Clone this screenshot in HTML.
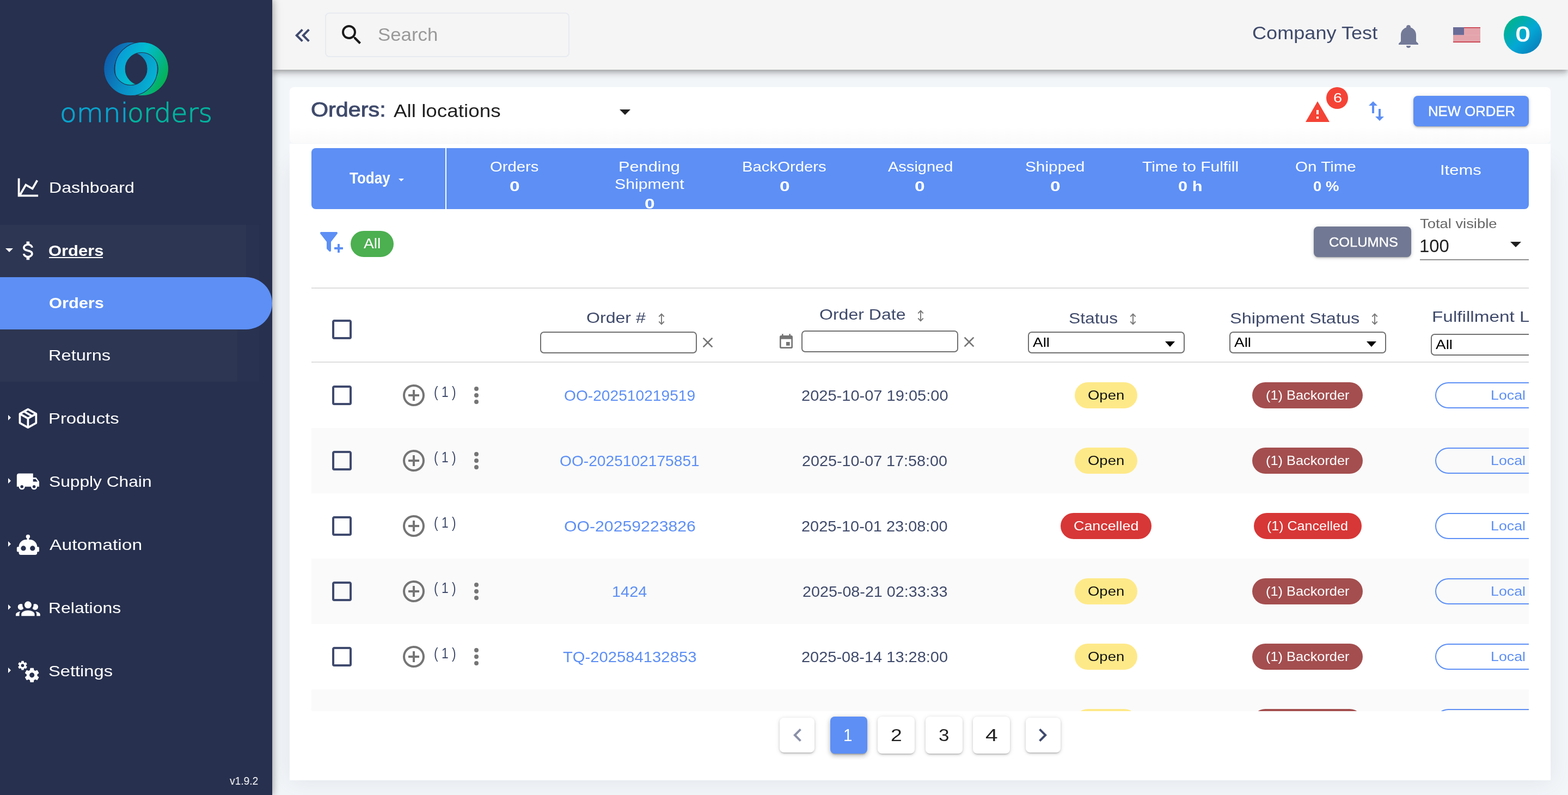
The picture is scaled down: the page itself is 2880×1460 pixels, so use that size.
<!DOCTYPE html>
<html lang="en"><head><meta charset="utf-8"><title>Orders</title>
<style>
*{box-sizing:border-box;margin:0;padding:0}
html,body{width:2880px;height:1460px;overflow:hidden;background:#f3f6f9}
body{font-family:"Liberation Sans",sans-serif;font-size:28px;position:relative}
div,span,svg,nav,header,main,aside,section,a,button,input,ul,li,h1,label,p,b,strong{position:absolute;display:block}
.t{white-space:nowrap;line-height:1;transform-origin:0 0;text-decoration:none;font-weight:400}
.i{overflow:visible}
button{border:0;background:none;font:inherit;color:inherit}
input{font:inherit;-webkit-appearance:none;appearance:none;outline:0}
a{color:inherit;text-decoration:none}
ul{list-style:none}
.field{border:2px solid #6f6f6f;border-radius:7px;background:#fff}
.chip{border-radius:24px}
.btn{border-radius:8px;box-shadow:0 3px 2px -2px rgba(0,0,0,.2),0 2px 4px rgba(0,0,0,.14),0 1px 8px rgba(0,0,0,.12)}
.pg{background:#fff;border-radius:8px;box-shadow:0 3px 2px -2px rgba(0,0,0,.2),0 2px 4px rgba(0,0,0,.14),0 1px 8px rgba(0,0,0,.12)}
.row-alt{background:#fafafa}
.rule{background:#dedede}
</style></head>
<body>
<div id="app" style="left:0;top:0;width:2880px;height:1460px;overflow:hidden;will-change:transform;">
<main class="content" style="left:0px;top:0px;width:2880px;height:1460px;">
<div class="card-shadow" style="left:532px;top:300px;width:2316px;height:1133px;box-shadow:0 2px 40px 2px rgba(60,80,100,.09);"></div>
<section class="card-head" style="left:532px;top:160px;width:2316px;height:103px;background:linear-gradient(#fff 70%,#fafafa);border-radius:8px;">
<h1 class="t" style="left:39.46px;top:24.02px;font-size:36.4px;color:#3f4a6b;transform:scaleX(1.1344);-webkit-text-stroke:.9px #3f4a6b;">Orders:</h1>
<span class="t" style="left:191.2px;top:28.03px;font-size:32.6px;color:#1f1f1f;transform:scaleX(1.1308);">All locations</span>
<svg class="i" viewBox="0 0 24 24" style="left:592.00px;top:20.50px;width:48.00px;height:48.00px;"><path fill="#1f1f1f" d="M7,10L12,15L17,10H7Z"/></svg>
<svg class="i" viewBox="0 0 24 24" style="left:1863.90px;top:22.20px;width:48.00px;height:48.00px;"><path fill="#f44336" d="M13,14H11V10H13M13,18H11V16H13M1,21H23L12,2L1,21Z"/></svg>
<span class="badge" style="left:1904px;top:0px;width:40px;height:40px;background:#f44336;border-radius:20px;">
<span class="t" style="left:12.54px;top:9.02px;font-size:23.5px;color:#fff;transform:scaleX(1.2346);">6</span>
</span>
<svg class="i" viewBox="0 0 24 24" style="left:1972.25px;top:20.25px;width:48.00px;height:48.00px;"><path fill="#5d8ff5" d="M9,3L5,7H8V14H10V7H13M16,17V10H14V17H11L15,21L19,17H16Z"/></svg>
<button class="btn" style="left:2064px;top:16px;width:212px;height:56px;background:#5d8ff5;">
<span class="t" style="left:26.99px;top:16.03px;font-size:25px;color:#fff;transform:scaleX(1.0296);-webkit-text-stroke:.4px #fff;">NEW ORDER</span>
</button>
</section>
<section class="card-body" style="left:532px;top:264px;width:2316px;height:1169px;background:#fff;">
<div class="stats" style="left:40px;top:8px;width:2236px;height:112px;background:#5d8ff5;border-radius:8px;overflow:hidden;">
<button class="period" style="left:0px;top:0px;width:246px;height:112px;">
<span class="t" style="left:70.2px;top:41.02px;font-size:28.9px;color:#fff;transform:scaleX(0.8996);font-weight:700;">Today</span>
<div class="caret" style="left:159.7px;top:55.8px;width:10px;height:5.5px;width:0;height:0;border-left:5px solid transparent;border-right:5px solid transparent;border-top:5.5px solid #fff;"></div>
</button>
<div class="sep" style="left:246px;top:0px;width:2px;height:112px;background:#fff;"></div>
<div class="stat" style="left:248.5px;top:0px;width:248.25px;height:112px;">
<span class="t" style="left:79.38px;top:21.03px;font-size:26.5px;color:#fff;transform:scaleX(1.1024);">Orders</span>
<b class="t" style="left:115.08px;top:58.03px;font-size:25.2px;color:#fff;transform:scaleX(1.3313);font-weight:700;">0</b>
</div>
<div class="stat" style="left:496.75px;top:0px;width:248.25px;height:112px;">
<span class="t" style="left:67.47px;top:21.03px;font-size:26.5px;color:#fff;transform:scaleX(1.1607);">Pending</span>
<span class="t" style="left:59.93px;top:53.03px;font-size:26.5px;color:#fff;transform:scaleX(1.1397);">Shipment</span>
<b class="t" style="left:115.28px;top:90.03px;font-size:25.2px;color:#fff;transform:scaleX(1.3313);font-weight:700;">0</b>
</div>
<div class="stat" style="left:745px;top:0px;width:248.25px;height:112px;">
<span class="t" style="left:46.21px;top:21.03px;font-size:26.5px;color:#fff;transform:scaleX(1.1058);">BackOrders</span>
<b class="t" style="left:115.08px;top:58.03px;font-size:25.2px;color:#fff;transform:scaleX(1.3313);font-weight:700;">0</b>
</div>
<div class="stat" style="left:993.25px;top:0px;width:248.25px;height:112px;">
<span class="t" style="left:65.38px;top:21.03px;font-size:26.5px;color:#fff;transform:scaleX(1.0951);">Assigned</span>
<b class="t" style="left:115.08px;top:58.03px;font-size:25.2px;color:#fff;transform:scaleX(1.3313);font-weight:700;">0</b>
</div>
<div class="stat" style="left:1241.5px;top:0px;width:248.25px;height:112px;">
<span class="t" style="left:69.94px;top:21.03px;font-size:26.5px;color:#fff;transform:scaleX(1.1244);">Shipped</span>
<b class="t" style="left:115.08px;top:58.03px;font-size:25.2px;color:#fff;transform:scaleX(1.3313);font-weight:700;">0</b>
</div>
<div class="stat" style="left:1489.75px;top:0px;width:248.25px;height:112px;">
<span class="t" style="left:36.43px;top:21.03px;font-size:26.5px;color:#fff;transform:scaleX(1.1314);">Time to Fulfill</span>
<b class="t" style="left:102.29px;top:58.03px;font-size:25.2px;color:#fff;transform:scaleX(1.2208);font-weight:700;">0 h</b>
</div>
<div class="stat" style="left:1738px;top:0px;width:248.25px;height:112px;">
<span class="t" style="left:69.49px;top:21.03px;font-size:26.5px;color:#fff;transform:scaleX(1.1165);">On Time</span>
<b class="t" style="left:101.76px;top:58.03px;font-size:25.2px;color:#fff;transform:scaleX(1.0939);font-weight:700;">0 %</b>
</div>
<div class="stat" style="left:1986.25px;top:0px;width:248.25px;height:112px;">
<span class="t" style="left:87.21px;top:27.03px;font-size:26.5px;color:#fff;transform:scaleX(1.1674);">Items</span>
</div>
</div>
<svg class="i" viewBox="0 0 24 24" style="left:52.00px;top:156.25px;width:48.00px;height:48.00px;"><path fill="#5d8ff5" d="M12,12V19.88C12.04,20.18 11.94,20.5 11.71,20.71C11.32,21.1 10.69,21.1 10.3,20.71L8.29,18.7C8.06,18.47 7.96,18.16 8,17.87V12H7.97L2.21,4.62C1.87,4.19 1.95,3.56 2.38,3.22C2.57,3.08 2.78,3 3,3H17C17.22,3 17.43,3.08 17.62,3.22C18.05,3.56 18.13,4.19 17.79,4.62L12.03,12H12M15,17H18V14H20V17H23V19H20V22H18V19H15V17Z"/></svg>
<span class="chip" style="left:112.25px;top:160px;width:78.75px;height:48px;background:#4caf50;">
<span class="t" style="left:23.75px;top:10.03px;font-size:26px;color:#fff;transform:scaleX(1.0853);">All</span>
</span>
<button class="btn" style="left:1881px;top:152px;width:179px;height:56px;background:#717893;">
<span class="t" style="left:27.51px;top:17.03px;font-size:24.2px;color:#fff;transform:scaleX(1.0491);-webkit-text-stroke:.4px #fff;">COLUMNS</span>
</button>
<div class="select-visible" style="left:2076px;top:132px;width:200px;height:82px;">
<label class="t" style="left:0.07px;top:3.02px;font-size:24.4px;color:#666;transform:scaleX(1.1222);">Total visible</label>
<span class="t" style="left:-1.06px;top:40.03px;font-size:32.6px;color:#1f1f1f;transform:scaleX(1.0089);">100</span>
<svg class="i" viewBox="0 0 24 24" style="left:152.00px;top:27.75px;width:48.00px;height:48.00px;"><path fill="#1f1f1f" d="M7,10L12,15L17,10H7Z"/></svg>
<div class="underline" style="left:0px;top:80px;width:200px;height:2px;background:#8e8e8e;"></div>
</div>
<div class="rule" style="left:40px;top:264px;width:2236px;height:2px;"></div>
<div class="table" style="left:40px;top:266px;width:2236px;height:776px;overflow:hidden;">
<div class="thead" style="left:0px;top:0px;width:2236px;height:134px;">
<svg class="i" viewBox="0 0 24 24" style="left:32.00px;top:51.00px;width:48.00px;height:48.00px;"><path fill="#3f4a6e" d="M19,3H5C3.89,3 3,3.89 3,5V19A2,2 0 0,0 5,21H19A2,2 0 0,0 21,19V5C21,3.89 20.1,3 19,3M19,5V19H5V5H19Z"/></svg>
<span class="t" style="left:505.25px;top:40.03px;font-size:27.4px;color:#3f4a6b;transform:scaleX(1.1713);">Order #</span>
<svg class="i sort" viewBox="0 0 12 22" style="left:636.7px;top:45.3px;width:12px;height:22px"><path fill="none" stroke="#787878" stroke-width="1.9" d="M6 1.6V20.4M1.3 6.5L6 1.6L10.7 6.5M1.3 15.5L6 20.4L10.7 15.5"/></svg>
<input class="field" type="text" aria-label="Order #" style="left:420px;top:79px;width:288px;height:40px;">
<svg class="i" viewBox="0 0 24 24" style="left:712.10px;top:83.10px;width:32.00px;height:32.00px;"><path fill="#757575" d="M19,6.41L17.59,5L12,10.59L6.41,5L5,6.41L10.59,12L5,17.59L6.41,19L12,13.41L17.59,19L19,17.59L13.41,12L19,6.41Z"/></svg>
<span class="t" style="left:932.75px;top:34.03px;font-size:27.4px;color:#3f4a6b;transform:scaleX(1.1699);">Order Date</span>
<svg class="i sort" viewBox="0 0 12 22" style="left:1113.2px;top:39.4px;width:12px;height:22px"><path fill="none" stroke="#787878" stroke-width="1.9" d="M6 1.6V20.4M1.3 6.5L6 1.6L10.7 6.5M1.3 15.5L6 20.4L10.7 15.5"/></svg>
<svg class="i" viewBox="0 0 24 24" style="left:856.10px;top:82.00px;width:32.00px;height:32.00px;"><path fill="#757575" d="M19,19H5V8H19M16,1V3H8V1H6V3H5C3.89,3 3,3.89 3,5V19A2,2 0 0,0 5,21H19A2,2 0 0,0 21,19V5C21,3.89 20.1,3 19,3H18V1M17,12H12V17H17V12Z"/></svg>
<input class="field" type="text" aria-label="Order Date" style="left:900px;top:77px;width:288px;height:40px;">
<svg class="i" viewBox="0 0 24 24" style="left:1192.00px;top:82.40px;width:32.00px;height:32.00px;"><path fill="#757575" d="M19,6.41L17.59,5L12,10.59L6.41,5L5,6.41L10.59,12L5,17.59L6.41,19L12,13.41L17.59,19L19,17.59L13.41,12L19,6.41Z"/></svg>
<span class="t" style="left:1391.01px;top:41.03px;font-size:27.4px;color:#3f4a6b;transform:scaleX(1.1617);">Status</span>
<svg class="i sort" viewBox="0 0 12 22" style="left:1503.2px;top:45.3px;width:12px;height:22px"><path fill="none" stroke="#787878" stroke-width="1.9" d="M6 1.6V20.4M1.3 6.5L6 1.6L10.7 6.5M1.3 15.5L6 20.4L10.7 15.5"/></svg>
<div class="field sel" style="left:1316px;top:79px;width:288px;height:40px;"></div><span class="t" style="left:1325.2px;top:87.03px;font-size:24.5px;color:#000;transform:scaleX(1.1401);">All</span><div class="caret" style="left:1568.4px;top:96.5px;width:19.5px;height:10.2px;width:0;height:0;border-left:9.75px solid transparent;border-right:9.75px solid transparent;border-top:10.2px solid #000;"></div>
<span class="t" style="left:1686.74px;top:41.03px;font-size:27.4px;color:#3f4a6b;transform:scaleX(1.1852);">Shipment Status</span>
<svg class="i sort" viewBox="0 0 12 22" style="left:1946.8px;top:45px;width:12px;height:22px"><path fill="none" stroke="#787878" stroke-width="1.9" d="M6 1.6V20.4M1.3 6.5L6 1.6L10.7 6.5M1.3 15.5L6 20.4L10.7 15.5"/></svg>
<div class="field sel" style="left:1686px;top:79px;width:288px;height:40px;"></div><span class="t" style="left:1695.2px;top:87.03px;font-size:24.5px;color:#000;transform:scaleX(1.1401);">All</span><div class="caret" style="left:1938.4px;top:96.5px;width:19.5px;height:10.2px;width:0;height:0;border-left:9.75px solid transparent;border-right:9.75px solid transparent;border-top:10.2px solid #000;"></div>
<span class="t" style="left:2057.8px;top:38.03px;font-size:27.4px;color:#3f4a6b;transform:scaleX(1.2162);">Fulfillment Location</span>
<div class="field sel" style="left:2056px;top:83px;width:288px;height:40px;"></div><span class="t" style="left:2065.2px;top:91.03px;font-size:24.5px;color:#000;transform:scaleX(1.1401);">All</span><div class="caret" style="left:2308.4px;top:100.5px;width:19.5px;height:10.2px;width:0;height:0;border-left:9.75px solid transparent;border-right:9.75px solid transparent;border-top:10.2px solid #000;"></div>
</div>
<div class="rule" style="left:0px;top:134px;width:2236px;height:2px;"></div>
<div class="row" style="left:0px;top:136px;width:2236px;height:120px;">
<svg class="i" viewBox="0 0 24 24" style="left:32.00px;top:36.00px;width:48.00px;height:48.00px;"><path fill="#3f4a6e" d="M19,3H5C3.89,3 3,3.89 3,5V19A2,2 0 0,0 5,21H19A2,2 0 0,0 21,19V5C21,3.89 20.1,3 19,3M19,5V19H5V5H19Z"/></svg>
<svg class="i" viewBox="0 0 24 24" style="left:164.10px;top:35.90px;width:48.00px;height:48.00px;"><path fill="#757575" d="M12,20C7.59,20 4,16.41 4,12C4,7.59 7.59,4 12,4C16.41,4 20,7.59 20,12C20,16.41 16.41,20 12,20M12,2A10,10 0 0,0 2,12A10,10 0 0,0 12,22A10,10 0 0,0 22,12A10,10 0 0,0 12,2M13,7H11V11H7V13H11V17H13V13H17V11H13V7Z"/></svg>
<span class="t" style="left:225.18px;top:41.04px;font-size:27px;color:#3f4a6b;transform:scaleX(0.8437);">( 1 )</span>
<svg class="i" viewBox="0 0 24 24" style="left:279.25px;top:36.00px;width:48.00px;height:48.00px;"><path fill="#757575" d="M12,16A2,2 0 0,1 14,18A2,2 0 0,1 12,20A2,2 0 0,1 10,18A2,2 0 0,1 12,16M12,10A2,2 0 0,1 14,12A2,2 0 0,1 12,14A2,2 0 0,1 10,12A2,2 0 0,1 12,10M12,4A2,2 0 0,1 14,6A2,2 0 0,1 12,8A2,2 0 0,1 10,6A2,2 0 0,1 12,4Z"/></svg>
<a class="t" style="left:464px;top:46.04px;font-size:28.5px;color:#5d8ff5;transform:scaleX(0.9884);">OO-202510219519</a>
<span class="t" style="left:899.89px;top:46.04px;font-size:28.5px;color:#3f4a6b;transform:scaleX(1.0187);">2025-10-07 19:05:00</span>
<span class="chip" style="left:1402px;top:36px;width:115px;height:48px;background:#fee989;">
<span class="t" style="left:24.01px;top:12.03px;font-size:24.1px;color:#111;transform:scaleX(1.1404);">Open</span>
</span>
<span class="chip" style="left:1728px;top:36px;width:203px;height:48px;background:#a44e4f;">
<span class="t" style="left:24.61px;top:12.03px;font-size:24.1px;color:#fff;transform:scaleX(1.0515);">(1) Backorder</span>
</span>
<span class="chip" style="left:2064px;top:36px;width:267px;height:48px;box-shadow:inset 0 0 0 2px #5d8ff5;">
<span class="t" style="left:101.71px;top:12.03px;font-size:24.1px;color:#5d8ff5;transform:scaleX(1.1119);">Local</span>
</span>
</div>
<div class="row row-alt" style="left:0px;top:256px;width:2236px;height:120px;">
<svg class="i" viewBox="0 0 24 24" style="left:32.00px;top:36.00px;width:48.00px;height:48.00px;"><path fill="#3f4a6e" d="M19,3H5C3.89,3 3,3.89 3,5V19A2,2 0 0,0 5,21H19A2,2 0 0,0 21,19V5C21,3.89 20.1,3 19,3M19,5V19H5V5H19Z"/></svg>
<svg class="i" viewBox="0 0 24 24" style="left:164.10px;top:35.90px;width:48.00px;height:48.00px;"><path fill="#757575" d="M12,20C7.59,20 4,16.41 4,12C4,7.59 7.59,4 12,4C16.41,4 20,7.59 20,12C20,16.41 16.41,20 12,20M12,2A10,10 0 0,0 2,12A10,10 0 0,0 12,22A10,10 0 0,0 22,12A10,10 0 0,0 12,2M13,7H11V11H7V13H11V17H13V13H17V11H13V7Z"/></svg>
<span class="t" style="left:225.18px;top:41.04px;font-size:27px;color:#3f4a6b;transform:scaleX(0.8437);">( 1 )</span>
<svg class="i" viewBox="0 0 24 24" style="left:279.25px;top:36.00px;width:48.00px;height:48.00px;"><path fill="#757575" d="M12,16A2,2 0 0,1 14,18A2,2 0 0,1 12,20A2,2 0 0,1 10,18A2,2 0 0,1 12,16M12,10A2,2 0 0,1 14,12A2,2 0 0,1 12,14A2,2 0 0,1 10,12A2,2 0 0,1 12,10M12,4A2,2 0 0,1 14,6A2,2 0 0,1 12,8A2,2 0 0,1 10,6A2,2 0 0,1 12,4Z"/></svg>
<a class="t" style="left:456.26px;top:46.04px;font-size:28.5px;color:#5d8ff5;transform:scaleX(0.9878);">OO-2025102175851</a>
<span class="t" style="left:901.15px;top:46.04px;font-size:28.5px;color:#3f4a6b;transform:scaleX(1.0092);">2025-10-07 17:58:00</span>
<span class="chip" style="left:1402px;top:36px;width:115px;height:48px;background:#fee989;">
<span class="t" style="left:24.01px;top:12.03px;font-size:24.1px;color:#111;transform:scaleX(1.1404);">Open</span>
</span>
<span class="chip" style="left:1728px;top:36px;width:203px;height:48px;background:#a44e4f;">
<span class="t" style="left:24.61px;top:12.03px;font-size:24.1px;color:#fff;transform:scaleX(1.0515);">(1) Backorder</span>
</span>
<span class="chip" style="left:2064px;top:36px;width:267px;height:48px;box-shadow:inset 0 0 0 2px #5d8ff5;">
<span class="t" style="left:101.71px;top:12.03px;font-size:24.1px;color:#5d8ff5;transform:scaleX(1.1119);">Local</span>
</span>
</div>
<div class="row" style="left:0px;top:376px;width:2236px;height:120px;">
<svg class="i" viewBox="0 0 24 24" style="left:32.00px;top:36.00px;width:48.00px;height:48.00px;"><path fill="#3f4a6e" d="M19,3H5C3.89,3 3,3.89 3,5V19A2,2 0 0,0 5,21H19A2,2 0 0,0 21,19V5C21,3.89 20.1,3 19,3M19,5V19H5V5H19Z"/></svg>
<svg class="i" viewBox="0 0 24 24" style="left:164.10px;top:35.90px;width:48.00px;height:48.00px;"><path fill="#757575" d="M12,20C7.59,20 4,16.41 4,12C4,7.59 7.59,4 12,4C16.41,4 20,7.59 20,12C20,16.41 16.41,20 12,20M12,2A10,10 0 0,0 2,12A10,10 0 0,0 12,22A10,10 0 0,0 22,12A10,10 0 0,0 12,2M13,7H11V11H7V13H11V17H13V13H17V11H13V7Z"/></svg>
<span class="t" style="left:225.18px;top:41.04px;font-size:27px;color:#3f4a6b;transform:scaleX(0.8437);">( 1 )</span>
<a class="t" style="left:463.66px;top:46.04px;font-size:28.5px;color:#5d8ff5;transform:scaleX(1.0601);">OO-20259223826</a>
<span class="t" style="left:900.39px;top:46.04px;font-size:28.5px;color:#3f4a6b;transform:scaleX(1.0149);">2025-10-01 23:08:00</span>
<span class="chip" style="left:1376px;top:36px;width:167px;height:48px;background:#d73737;">
<span class="t" style="left:24.04px;top:12.03px;font-size:24.1px;color:#fff;transform:scaleX(1.1137);">Cancelled</span>
</span>
<span class="chip" style="left:1731px;top:36px;width:198px;height:48px;background:#d73737;">
<span class="t" style="left:24.23px;top:12.03px;font-size:24.1px;color:#fff;transform:scaleX(1.0387);">(1) Cancelled</span>
</span>
<span class="chip" style="left:2064px;top:36px;width:267px;height:48px;box-shadow:inset 0 0 0 2px #5d8ff5;">
<span class="t" style="left:101.71px;top:12.03px;font-size:24.1px;color:#5d8ff5;transform:scaleX(1.1119);">Local</span>
</span>
</div>
<div class="row row-alt" style="left:0px;top:496px;width:2236px;height:120px;">
<svg class="i" viewBox="0 0 24 24" style="left:32.00px;top:36.00px;width:48.00px;height:48.00px;"><path fill="#3f4a6e" d="M19,3H5C3.89,3 3,3.89 3,5V19A2,2 0 0,0 5,21H19A2,2 0 0,0 21,19V5C21,3.89 20.1,3 19,3M19,5V19H5V5H19Z"/></svg>
<svg class="i" viewBox="0 0 24 24" style="left:164.10px;top:35.90px;width:48.00px;height:48.00px;"><path fill="#757575" d="M12,20C7.59,20 4,16.41 4,12C4,7.59 7.59,4 12,4C16.41,4 20,7.59 20,12C20,16.41 16.41,20 12,20M12,2A10,10 0 0,0 2,12A10,10 0 0,0 12,22A10,10 0 0,0 22,12A10,10 0 0,0 12,2M13,7H11V11H7V13H11V17H13V13H17V11H13V7Z"/></svg>
<span class="t" style="left:225.18px;top:41.04px;font-size:27px;color:#3f4a6b;transform:scaleX(0.8437);">( 1 )</span>
<svg class="i" viewBox="0 0 24 24" style="left:279.25px;top:36.00px;width:48.00px;height:48.00px;"><path fill="#757575" d="M12,16A2,2 0 0,1 14,18A2,2 0 0,1 12,20A2,2 0 0,1 10,18A2,2 0 0,1 12,16M12,10A2,2 0 0,1 14,12A2,2 0 0,1 12,14A2,2 0 0,1 10,12A2,2 0 0,1 12,10M12,4A2,2 0 0,1 14,6A2,2 0 0,1 12,8A2,2 0 0,1 10,6A2,2 0 0,1 12,4Z"/></svg>
<a class="t" style="left:552.02px;top:46.04px;font-size:28.5px;color:#5d8ff5;transform:scaleX(1.0138);">1424</a>
<span class="t" style="left:901.65px;top:46.04px;font-size:28.5px;color:#3f4a6b;transform:scaleX(1.0071);">2025-08-21 02:33:33</span>
<span class="chip" style="left:1402px;top:36px;width:115px;height:48px;background:#fee989;">
<span class="t" style="left:24.01px;top:12.03px;font-size:24.1px;color:#111;transform:scaleX(1.1404);">Open</span>
</span>
<span class="chip" style="left:1728px;top:36px;width:203px;height:48px;background:#a44e4f;">
<span class="t" style="left:24.61px;top:12.03px;font-size:24.1px;color:#fff;transform:scaleX(1.0515);">(1) Backorder</span>
</span>
<span class="chip" style="left:2064px;top:36px;width:267px;height:48px;box-shadow:inset 0 0 0 2px #5d8ff5;">
<span class="t" style="left:101.71px;top:12.03px;font-size:24.1px;color:#5d8ff5;transform:scaleX(1.1119);">Local</span>
</span>
</div>
<div class="row" style="left:0px;top:616px;width:2236px;height:120px;">
<svg class="i" viewBox="0 0 24 24" style="left:32.00px;top:36.00px;width:48.00px;height:48.00px;"><path fill="#3f4a6e" d="M19,3H5C3.89,3 3,3.89 3,5V19A2,2 0 0,0 5,21H19A2,2 0 0,0 21,19V5C21,3.89 20.1,3 19,3M19,5V19H5V5H19Z"/></svg>
<svg class="i" viewBox="0 0 24 24" style="left:164.10px;top:35.90px;width:48.00px;height:48.00px;"><path fill="#757575" d="M12,20C7.59,20 4,16.41 4,12C4,7.59 7.59,4 12,4C16.41,4 20,7.59 20,12C20,16.41 16.41,20 12,20M12,2A10,10 0 0,0 2,12A10,10 0 0,0 12,22A10,10 0 0,0 22,12A10,10 0 0,0 12,2M13,7H11V11H7V13H11V17H13V13H17V11H13V7Z"/></svg>
<span class="t" style="left:225.18px;top:41.04px;font-size:27px;color:#3f4a6b;transform:scaleX(0.8437);">( 1 )</span>
<svg class="i" viewBox="0 0 24 24" style="left:279.25px;top:36.00px;width:48.00px;height:48.00px;"><path fill="#757575" d="M12,16A2,2 0 0,1 14,18A2,2 0 0,1 12,20A2,2 0 0,1 10,18A2,2 0 0,1 12,16M12,10A2,2 0 0,1 14,12A2,2 0 0,1 12,14A2,2 0 0,1 10,12A2,2 0 0,1 12,10M12,4A2,2 0 0,1 14,6A2,2 0 0,1 12,8A2,2 0 0,1 10,6A2,2 0 0,1 12,4Z"/></svg>
<a class="t" style="left:462.37px;top:46.04px;font-size:28.5px;color:#5d8ff5;transform:scaleX(1.0256);">TQ-202584132853</a>
<span class="t" style="left:900.14px;top:46.04px;font-size:28.5px;color:#3f4a6b;transform:scaleX(1.0168);">2025-08-14 13:28:00</span>
<span class="chip" style="left:1402px;top:36px;width:115px;height:48px;background:#fee989;">
<span class="t" style="left:24.01px;top:12.03px;font-size:24.1px;color:#111;transform:scaleX(1.1404);">Open</span>
</span>
<span class="chip" style="left:1728px;top:36px;width:203px;height:48px;background:#a44e4f;">
<span class="t" style="left:24.61px;top:12.03px;font-size:24.1px;color:#fff;transform:scaleX(1.0515);">(1) Backorder</span>
</span>
<span class="chip" style="left:2064px;top:36px;width:267px;height:48px;box-shadow:inset 0 0 0 2px #5d8ff5;">
<span class="t" style="left:101.71px;top:12.03px;font-size:24.1px;color:#5d8ff5;transform:scaleX(1.1119);">Local</span>
</span>
</div>
<div class="row row-alt" style="left:0px;top:736px;width:2236px;height:120px;">
<svg class="i" viewBox="0 0 24 24" style="left:32.00px;top:36.00px;width:48.00px;height:48.00px;"><path fill="#3f4a6e" d="M19,3H5C3.89,3 3,3.89 3,5V19A2,2 0 0,0 5,21H19A2,2 0 0,0 21,19V5C21,3.89 20.1,3 19,3M19,5V19H5V5H19Z"/></svg>
<svg class="i" viewBox="0 0 24 24" style="left:164.10px;top:35.90px;width:48.00px;height:48.00px;"><path fill="#757575" d="M12,20C7.59,20 4,16.41 4,12C4,7.59 7.59,4 12,4C16.41,4 20,7.59 20,12C20,16.41 16.41,20 12,20M12,2A10,10 0 0,0 2,12A10,10 0 0,0 12,22A10,10 0 0,0 22,12A10,10 0 0,0 12,2M13,7H11V11H7V13H11V17H13V13H17V11H13V7Z"/></svg>
<span class="t" style="left:225.18px;top:41.04px;font-size:27px;color:#3f4a6b;transform:scaleX(0.8437);">( 1 )</span>
<svg class="i" viewBox="0 0 24 24" style="left:279.25px;top:36.00px;width:48.00px;height:48.00px;"><path fill="#757575" d="M12,16A2,2 0 0,1 14,18A2,2 0 0,1 12,20A2,2 0 0,1 10,18A2,2 0 0,1 12,16M12,10A2,2 0 0,1 14,12A2,2 0 0,1 12,14A2,2 0 0,1 10,12A2,2 0 0,1 12,10M12,4A2,2 0 0,1 14,6A2,2 0 0,1 12,8A2,2 0 0,1 10,6A2,2 0 0,1 12,4Z"/></svg>
<span class="chip" style="left:1402px;top:36px;width:115px;height:48px;background:#fee989;">
<span class="t" style="left:24.01px;top:12.03px;font-size:24.1px;color:#111;transform:scaleX(1.1404);">Open</span>
</span>
<span class="chip" style="left:1728px;top:36px;width:203px;height:48px;background:#a44e4f;">
<span class="t" style="left:24.61px;top:12.03px;font-size:24.1px;color:#fff;transform:scaleX(1.0515);">(1) Backorder</span>
</span>
<span class="chip" style="left:2064px;top:36px;width:267px;height:48px;box-shadow:inset 0 0 0 2px #5d8ff5;">
<span class="t" style="left:101.71px;top:12.03px;font-size:24.1px;color:#5d8ff5;transform:scaleX(1.1119);">Local</span>
</span>
</div>
</div>
<nav class="pagination" style="left:868px;top:1042px;width:580px;height:94px;">
<button class="pg" style="left:32px;top:12px;width:64px;height:64px;">
<svg class="i" viewBox="0 0 24 24" style="left:8.60px;top:8.00px;width:48.00px;height:48.00px;"><path fill="#8b90a8" d="M15.41,16.58L10.83,12L15.41,7.41L14,6L8,12L14,18L15.41,16.58Z"/></svg>
</button>
<button class="pg-active" style="left:125px;top:10px;width:68px;height:68px;background:#5d8ff5;border-radius:8px;box-shadow:0 3px 3px -2px rgba(0,0,0,.3),0 4px 8px rgba(0,0,0,.2),0 1px 12px rgba(0,0,0,.12);">
<span class="t" style="left:24.31px;top:19.03px;font-size:31.2px;color:#fff;transform:scaleX(0.95);">1</span>
</button>
<button class="pg" style="left:212.3px;top:10px;width:68px;height:68px;">
<span class="t" style="left:23.7px;top:19.03px;font-size:31.2px;color:#1f1f1f;transform:scaleX(1.1966);">2</span>
</button>
<button class="pg" style="left:299.6px;top:10px;width:68px;height:68px;">
<span class="t" style="left:24.6px;top:19.03px;font-size:31.2px;color:#1f1f1f;transform:scaleX(1.1249);">3</span>
</button>
<button class="pg" style="left:387px;top:10px;width:68px;height:68px;">
<span class="t" style="left:23.06px;top:19.03px;font-size:31.2px;color:#1f1f1f;transform:scaleX(1.3054);">4</span>
</button>
<button class="pg" style="left:484px;top:12px;width:64px;height:64px;">
<svg class="i" viewBox="0 0 24 24" style="left:7.40px;top:8.00px;width:48.00px;height:48.00px;"><path fill="#3f4a6e" d="M8.59,16.58L13.17,12L8.59,7.41L10,6L16,12L10,18L8.59,16.58Z"/></svg>
</button>
</nav>
</section>
</main>
<header class="topbar" style="left:500px;top:0px;width:2380px;height:128px;background:#f5f5f5;box-shadow:0 4px 8px -2px rgba(0,0,0,.2),0 8px 10px rgba(0,0,0,.14),0 2px 20px rgba(0,0,0,.12);">
<svg class="i" viewBox="0 0 24 24" style="left:31.60px;top:41.00px;width:48.00px;height:48.00px;"><path fill="#3f4a6e" d="M18.41,7.41L17,6L11,12L17,18L18.41,16.59L13.83,12L18.41,7.41M12.41,7.41L11,6L5,12L11,18L12.41,16.59L7.83,12L12.41,7.41Z"/></svg>
<div class="search" style="left:96.5px;top:22.5px;width:449px;height:82.75px;box-shadow:inset 0 0 0 2px #e7eaf0;border-radius:8px;">
<svg class="i" viewBox="0 0 24 24" style="left:25.00px;top:17.80px;width:48.00px;height:48.00px;"><path fill="#1a1a1a" d="M9.5,3A6.5,6.5 0 0,1 16,9.5C16,11.11 15.41,12.59 14.44,13.73L14.71,14H15.5L20.5,19L19,20.5L14,15.5V14.71L13.73,14.44C12.59,15.41 11.11,16 9.5,16A6.5,6.5 0 0,1 3,9.5A6.5,6.5 0 0,1 9.5,3M9.5,5C7,5 5,7 5,9.5C5,12 7,14 9.5,14C12,14 14,12 14,9.5C14,7 12,5 9.5,5Z"/></svg>
<span class="t" style="left:97.41px;top:25.53px;font-size:32.6px;color:#999;transform:scaleX(1.0683);">Search</span>
</div>
<span class="t" style="left:1800.06px;top:44.02px;font-size:33px;color:#3f4a6b;transform:scaleX(1.0943);">Company Test</span>
<svg class="i" viewBox="0 0 24 24" style="left:2062.80px;top:42.00px;width:48.00px;height:48.00px;"><path fill="#737a98" d="M21,19V20H3V19L5,17V11C5,7.9 7.03,5.17 10,4.29C10,4.19 10,4.1 10,4A2,2 0 0,1 12,2A2,2 0 0,1 14,4C14,4.1 14,4.19 14,4.29C16.97,5.17 19,7.9 19,11V17L21,19M14,21A2,2 0 0,1 12,23A2,2 0 0,1 10,21"/></svg>
<svg class="i flag" viewBox="0 0 50 28" style="left:2169px;top:50px;width:50px;height:28px"><rect width="50" height="28" fill="#e4a4ac"/><rect width="50" height="1.5" fill="#c4303e"/><rect y="26.4" width="50" height="1.6" fill="#c4303e"/><rect y="13.8" width="50" height="1" fill="#e8b0b6"/><rect width="20" height="14.2" fill="#6a6c98"/></svg>
<div class="avatar" style="left:2261.75px;top:28.75px;width:70.5px;height:70.5px;border-radius:50%;background:linear-gradient(135deg,#00b38a 12%,#04a8d6 55%,#0a78b6 95%);">
<span class="t" style="left:21.77px;top:14.28px;font-size:39.6px;color:#fff;transform:scaleX(1.1919);-webkit-text-stroke:1.2px #fff;">0</span>
</div>
</header>
<aside class="sidebar" style="left:0px;top:0px;width:500px;height:1460px;background:#27304e;box-shadow:0 0 12px 1px rgba(0,0,0,.3),0 0 22px rgba(0,0,0,.12);">
<div class="logo" style="left:100px;top:60px;width:300px;height:180px;">
<svg class="i" viewBox="180 70 140 112" style="left:80px;top:10px;width:140px;height:112px">
<defs>
<linearGradient id="ga" gradientUnits="userSpaceOnUse" x1="191" y1="110" x2="292" y2="150"><stop offset="0" stop-color="#0e5cab"/><stop offset=".45" stop-color="#0a8cc4"/><stop offset="1" stop-color="#05b8d6"/></linearGradient>
<linearGradient id="gb" gradientUnits="userSpaceOnUse" x1="212" y1="100" x2="306" y2="150"><stop offset="0" stop-color="#0a98d8"/><stop offset=".42" stop-color="#03bccf"/><stop offset=".75" stop-color="#04b48a"/><stop offset="1" stop-color="#05b04c"/></linearGradient>
<clipPath id="cb"><rect x="180" y="126.5" width="140" height="60"/></clipPath>
</defs>
<path id="rl" fill="url(#ga)" fill-rule="evenodd" stroke="#27304e" stroke-width="1.1" d="M190.7 126.5a49.3 49.3 0 1 0 98.6 0a49.3 49.3 0 1 0 -98.6 0ZM210 126.5a30 30 0 1 0 60 0a30 30 0 1 0 -60 0Z"/>
<path fill="url(#gb)" fill-rule="evenodd" stroke="#27304e" stroke-width="1.1" d="M210.9 126.5a49.3 49.3 0 1 0 98.6 0a49.3 49.3 0 1 0 -98.6 0ZM230.2 126.5a30 30 0 1 0 60 0a30 30 0 1 0 -60 0Z"/>
<use href="#rl" clip-path="url(#cb)"/>
</svg>
<span class="t" style="left:10.37px;top:124.03px;font-size:47.5px;color:#0aa3cc;transform:scaleX(1.0592);font-weight:200;font-family:'DejaVu Sans',sans-serif;-webkit-text-stroke:1.1px #0aa3cc;">omni</span>
<span class="t" style="left:133.67px;top:124.03px;font-size:47.5px;color:#03b39e;transform:scaleX(1.0313);font-weight:200;font-family:'DejaVu Sans',sans-serif;-webkit-text-stroke:1.1px #03b39e;">orders</span>
</div>
<nav class="menu" style="left:0px;top:286px;width:500px;height:1014px;">
<a class="item" style="left:0px;top:0px;width:500px;height:116px;">
<svg class="i" viewBox="0 0 24 24" style="left:29.35px;top:36.00px;width:44.80px;height:44.80px;"><path fill="#fff" d="M16,11.78L20.24,4.45L21.97,5.45L16.74,14.5L10.23,10.75L5.46,19H22V21H2V3H4V17.54L9.5,8L16,11.78Z"/></svg>
<span class="t" style="left:89.5px;top:44.04px;font-size:28.5px;color:#fff;transform:scaleX(1.1247);">Dashboard</span>
</a>
<div class="group open" style="left:0px;top:127px;width:476px;height:288px;background:#293250;">
<a class="item head" style="left:0px;top:0px;width:452px;height:96px;background:#2d3652;">
<div class="caret" style="left:10px;top:42.75px;width:14px;height:7.5px;width:0;height:0;border-left:7px solid transparent;border-right:7px solid transparent;border-top:7.5px solid #fff;"></div>
<svg class="i" viewBox="0 0 24 24" style="left:29.20px;top:25.00px;width:44.80px;height:44.80px;"><path fill="#fff" d="M7,15H9C9,16.08 10.37,17 12,17C13.63,17 15,16.08 15,15C15,13.9 13.96,13.5 11.76,12.97C9.64,12.44 7,11.78 7,9C7,7.21 8.47,5.69 10.5,5.18V3H13.5V5.18C15.53,5.69 17,7.21 17,9H15C15,7.92 13.63,7 12,7C10.37,7 9,7.92 9,9C9,10.1 10.04,10.5 12.24,11.03C14.36,11.56 17,12.22 17,15C17,16.79 15.53,18.31 13.5,18.82V21H10.5V18.82C8.47,18.31 7,16.79 7,15Z"/></svg>
<span class="t" style="left:89.03px;top:33.04px;font-size:28.5px;color:#fff;transform:scaleX(1.0857);font-weight:700;">Orders</span>
<div class="ul" style="left:90px;top:58.5px;width:99.25px;height:2.5px;background:#fff;"></div>
</a>
<a class="item active" style="left:0px;top:96px;width:500px;height:96px;background:#5d8ff5;border-radius:0 48px 48px 0;">
<span class="t" style="left:89.54px;top:33.04px;font-size:28.5px;color:#fff;transform:scaleX(1.0802);font-weight:700;">Orders</span>
</a>
<a class="item" style="left:0px;top:192px;width:436px;height:96px;background:#2d3652;">
<span class="t" style="left:88.96px;top:33.04px;font-size:28.5px;color:#fff;transform:scaleX(1.143);">Returns</span>
</a>
</div>
<a class="item" style="left:0px;top:424.4px;width:500px;height:116px;">
<div class="caret" style="left:15px;top:51.3px;width:5.8px;height:11.4px;width:0;height:0;border-top:5.7px solid transparent;border-bottom:5.7px solid transparent;border-left:5.8px solid #fff;"></div>
<svg class="i" viewBox="0 0 24 24" style="left:29.35px;top:35.60px;width:44.80px;height:44.80px;"><path fill="#fff" d="M21,16.5C21,16.88 20.79,17.21 20.47,17.38L12.57,21.82C12.41,21.94 12.21,22 12,22C11.79,22 11.59,21.94 11.43,21.82L3.53,17.38C3.21,17.21 3,16.88 3,16.5V7.5C3,7.12 3.21,6.79 3.53,6.62L11.43,2.18C11.59,2.06 11.79,2 12,2C12.21,2 12.41,2.06 12.57,2.18L20.47,6.62C20.79,6.79 21,7.12 21,7.5V16.5M12,4.15L10.11,5.22L16,8.61L17.96,7.5L12,4.15M6.04,7.5L12,10.85L13.96,9.75L8.08,6.35L6.04,7.5M5,15.91L11,19.29V12.58L5,9.21V15.91M19,15.91V9.21L13,12.58V19.29L19,15.91Z"/></svg>
<span class="t" style="left:88.93px;top:43.63px;font-size:28.5px;color:#fff;transform:scaleX(1.1522);">Products</span>
</a>
<a class="item" style="left:0px;top:540.4px;width:500px;height:116px;">
<div class="caret" style="left:15px;top:51.3px;width:5.8px;height:11.4px;width:0;height:0;border-top:5.7px solid transparent;border-bottom:5.7px solid transparent;border-left:5.8px solid #fff;"></div>
<svg class="i" viewBox="0 0 24 24" style="left:29.35px;top:35.60px;width:44.80px;height:44.80px;"><path fill="#fff" d="M18,18.5A1.5,1.5 0 0,1 16.5,17A1.5,1.5 0 0,1 18,15.5A1.5,1.5 0 0,1 19.5,17A1.5,1.5 0 0,1 18,18.5M19.5,9.5L21.46,12H17V9.5M6,18.5A1.5,1.5 0 0,1 4.5,17A1.5,1.5 0 0,1 6,15.5A1.5,1.5 0 0,1 7.5,17A1.5,1.5 0 0,1 6,18.5M20,8H17V4H3C1.89,4 1,4.89 1,6V17H3A3,3 0 0,0 6,20A3,3 0 0,0 9,17H15A3,3 0 0,0 18,20A3,3 0 0,0 21,17H23V12L20,8Z"/></svg>
<span class="t" style="left:89.51px;top:43.63px;font-size:28.5px;color:#fff;transform:scaleX(1.112);">Supply Chain</span>
</a>
<a class="item" style="left:0px;top:656.4px;width:500px;height:116px;">
<div class="caret" style="left:15px;top:51.3px;width:5.8px;height:11.4px;width:0;height:0;border-top:5.7px solid transparent;border-bottom:5.7px solid transparent;border-left:5.8px solid #fff;"></div>
<svg class="i" viewBox="0 0 24 24" style="left:29.35px;top:35.60px;width:44.80px;height:44.80px;"><path fill="#fff" d="M12,2A2,2 0 0,1 14,4C14,4.74 13.6,5.39 13,5.73V7H14A7,7 0 0,1 21,14H22A1,1 0 0,1 23,15V18A1,1 0 0,1 22,19H21V20A2,2 0 0,1 19,22H5A2,2 0 0,1 3,20V19H2A1,1 0 0,1 1,18V15A1,1 0 0,1 2,14H3A7,7 0 0,1 10,7H11V5.73C10.4,5.39 10,4.74 10,4A2,2 0 0,1 12,2M7.5,13A2.5,2.5 0 0,0 5,15.5A2.5,2.5 0 0,0 7.5,18A2.5,2.5 0 0,0 10,15.5A2.5,2.5 0 0,0 7.5,13M16.5,13A2.5,2.5 0 0,0 14,15.5A2.5,2.5 0 0,0 16.5,18A2.5,2.5 0 0,0 19,15.5A2.5,2.5 0 0,0 16.5,13Z"/></svg>
<span class="t" style="left:90.5px;top:43.63px;font-size:28.5px;color:#fff;transform:scaleX(1.1801);">Automation</span>
</a>
<a class="item" style="left:0px;top:772.4px;width:500px;height:116px;">
<div class="caret" style="left:15px;top:51.3px;width:5.8px;height:11.4px;width:0;height:0;border-top:5.7px solid transparent;border-bottom:5.7px solid transparent;border-left:5.8px solid #fff;"></div>
<svg class="i" viewBox="0 0 24 24" style="left:29.35px;top:35.60px;width:44.80px;height:44.80px;"><path fill="#fff" d="M12,5.5A3.5,3.5 0 0,1 15.5,9A3.5,3.5 0 0,1 12,12.5A3.5,3.5 0 0,1 8.5,9A3.5,3.5 0 0,1 12,5.5M5,8C5.56,8 6.08,8.15 6.53,8.42C6.38,9.85 6.8,11.27 7.66,12.38C7.16,13.34 6.16,14 5,14A3,3 0 0,1 2,11A3,3 0 0,1 5,8M19,8A3,3 0 0,1 22,11A3,3 0 0,1 19,14C17.84,14 16.84,13.34 16.34,12.38C17.2,11.27 17.62,9.85 17.47,8.42C17.92,8.15 18.44,8 19,8M5.5,18.25C5.5,16.18 8.41,14.5 12,14.5C15.59,14.5 18.5,16.18 18.5,18.25V20H5.5V18.25M0,20V18.5C0,17.11 1.89,15.94 4.45,15.6C3.86,16.28 3.5,17.22 3.5,18.25V20H0M24,20H20.5V18.25C20.5,17.22 20.14,16.28 19.55,15.6C22.11,15.94 24,17.11 24,18.5V20Z"/></svg>
<span class="t" style="left:89px;top:43.63px;font-size:28.5px;color:#fff;transform:scaleX(1.1215);">Relations</span>
</a>
<a class="item" style="left:0px;top:888.4px;width:500px;height:116px;">
<div class="caret" style="left:15px;top:51.3px;width:5.8px;height:11.4px;width:0;height:0;border-top:5.7px solid transparent;border-bottom:5.7px solid transparent;border-left:5.8px solid #fff;"></div>
<svg class="i" viewBox="0 0 24 24" style="left:29.35px;top:35.60px;width:44.80px;height:44.80px;"><path fill="#fff" d="M15.9,18.45C17.25,18.45 18.35,17.35 18.35,16C18.35,14.65 17.25,13.55 15.9,13.55C14.54,13.55 13.45,14.65 13.45,16C13.45,17.35 14.54,18.45 15.9,18.45M21.1,16.68L22.58,17.84C22.71,17.95 22.75,18.13 22.66,18.29L21.26,20.71C21.17,20.86 21,20.92 20.83,20.86L19.09,20.16C18.73,20.44 18.33,20.67 17.91,20.85L17.64,22.7C17.62,22.87 17.47,23 17.3,23H14.5C14.32,23 14.18,22.87 14.15,22.7L13.89,20.85C13.46,20.67 13.07,20.44 12.71,20.16L10.96,20.86C10.81,20.92 10.62,20.86 10.54,20.71L9.14,18.29C9.05,18.13 9.09,17.95 9.22,17.84L10.7,16.68L10.65,16L10.7,15.31L9.22,14.16C9.09,14.05 9.05,13.86 9.14,13.71L10.54,11.29C10.62,11.13 10.81,11.07 10.96,11.13L12.71,11.84C13.07,11.56 13.46,11.32 13.89,11.15L14.15,9.29C14.18,9.13 14.32,9 14.5,9H17.3C17.47,9 17.62,9.13 17.64,9.29L17.91,11.15C18.33,11.32 18.73,11.56 19.09,11.84L20.83,11.13C21,11.07 21.17,11.13 21.26,11.29L22.66,13.71C22.75,13.86 22.71,14.05 22.58,14.16L21.1,15.31L21.15,16L21.1,16.68M6.69,8.07C7.56,8.07 8.26,7.37 8.26,6.5C8.26,5.63 7.56,4.92 6.69,4.92A1.58,1.58 0 0,0 5.11,6.5C5.11,7.37 5.82,8.07 6.69,8.07M10.03,6.94L11,7.68C11.07,7.75 11.09,7.87 11.03,7.97L10.13,9.53C10.08,9.63 9.96,9.67 9.86,9.63L8.74,9.18L8,9.62L7.81,10.81C7.79,10.92 7.7,11 7.59,11H5.79C5.67,11 5.58,10.92 5.56,10.81L5.4,9.62L4.64,9.18L3.5,9.63C3.41,9.67 3.3,9.63 3.24,9.53L2.34,7.97C2.28,7.87 2.31,7.75 2.39,7.68L3.34,6.94L3.31,6.5L3.34,6.06L2.39,5.32C2.31,5.25 2.28,5.13 2.34,5.03L3.24,3.47C3.3,3.37 3.41,3.33 3.5,3.37L4.63,3.82L5.4,3.38L5.56,2.19C5.58,2.08 5.67,2 5.79,2H7.59C7.7,2 7.79,2.08 7.81,2.19L8,3.38L8.74,3.82L9.86,3.37C9.96,3.33 10.08,3.37 10.13,3.47L11.03,5.03C11.09,5.13 11.07,5.25 11,5.32L10.03,6.06L10.06,6.5L10.03,6.94Z"/></svg>
<span class="t" style="left:89.48px;top:43.63px;font-size:28.5px;color:#fff;transform:scaleX(1.1463);">Settings</span>
</a>
</nav>
<span class="t version" style="left:422.25px;top:1423.02px;font-size:21px;color:#fff;transform:scaleX(0.9138);">v1.9.2</span>
</aside>
</div>
</body></html>
